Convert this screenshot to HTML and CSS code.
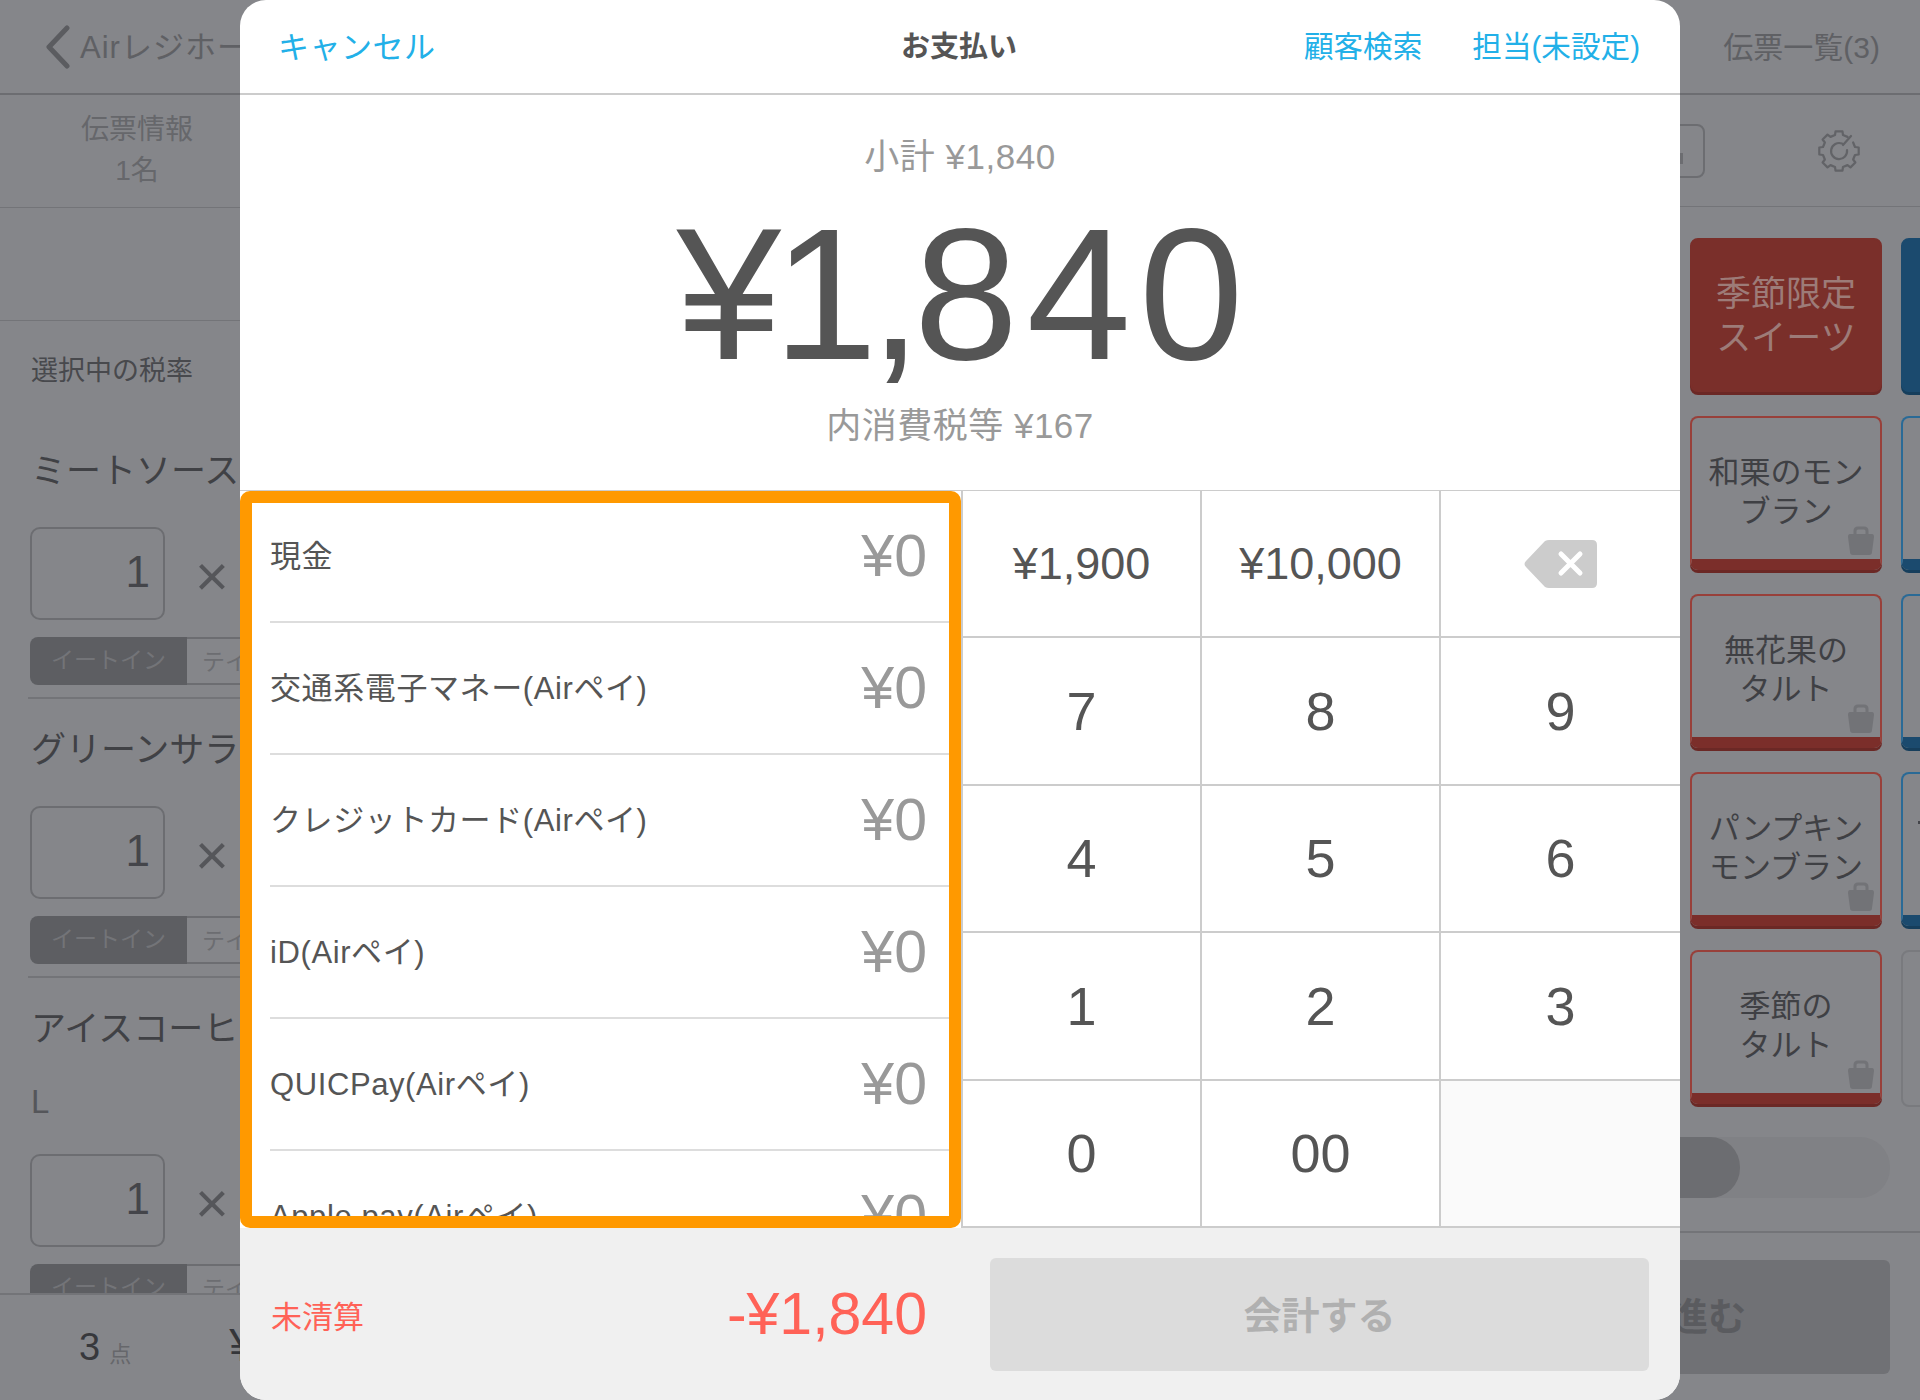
FILE: index.html
```html
<!DOCTYPE html>
<html lang="ja">
<head>
  <meta charset="UTF-8" />
  <title>お支払い</title>
  <link rel="stylesheet" href="styles.css">
</head>
<body>

  <div class="register">
    <div class="topbar">
      <div class="back">
        <svg class="chevron" width="28" height="44" viewBox="0 0 28 44"><path d="M23 3 L5 22 L23 41" fill="none" stroke="#5b5c60" stroke-width="5" stroke-linecap="round" stroke-linejoin="round"/></svg>
        <span>Airレジホーム</span>
      </div>
      <div class="slips">伝票一覧(3)</div>
    </div>

    <div class="columns">
      <div class="ticket">
        <div class="ticket-info">伝票情報<br>1名</div>
        <div class="ticket-blank"></div>
        <div class="tax">選択中の税率</div>
        <div class="items">
          <div class="item">
            <div class="name">ミートソース</div>
            <div class="qty-row"><div class="qty">1</div><div class="times">×</div></div>
            <div class="seg"><div class="seg-on">イートイン</div><div class="seg-off">テイクアウト</div></div>
          </div>
          <div class="item">
            <div class="name">グリーンサラダ</div>
            <div class="qty-row"><div class="qty">1</div><div class="times">×</div></div>
            <div class="seg"><div class="seg-on">イートイン</div><div class="seg-off">テイクアウト</div></div>
          </div>
          <div class="item">
            <div class="name">アイスコーヒー</div>
            <div class="opt">L</div>
            <div class="qty-row"><div class="qty">1</div><div class="times">×</div></div>
            <div class="seg"><div class="seg-on">イートイン</div><div class="seg-off">テイクアウト</div></div>
          </div>
        </div>
        <div class="ticket-foot">
          <span class="count">3</span><span class="unit">点</span><span class="foot-total">¥1,840</span>
        </div>
      </div>

      <div class="menu">
        <div class="toolbar">
          <div class="tool-btn"><div class="tool-mark"></div></div>
          <svg class="gear" width="48" height="48" viewBox="-24 -24 48 48" fill="none" stroke="#626367" stroke-width="2.2" stroke-linejoin="round" stroke-linecap="round">
            <polyline points="14.14,-8.5 16.01,-3.99 19.7,-3.48 19.7,3.48 16.01,3.99 14.14,8.5 16.38,11.48 11.48,16.38 8.5,14.14 3.99,16.01 3.48,19.7 -3.48,19.7 -3.99,16.01 -8.5,14.14 -11.48,16.38 -16.38,11.48 -14.14,8.5 -16.01,3.99 -19.7,3.48 -19.7,-3.48 -16.01,-3.99 -14.14,-8.5 -16.38,-11.48 -11.48,-16.38 -8.5,-14.14 -3.99,-16.01 -3.48,-19.7 3.48,-19.7 3.99,-16.01 8.5,-14.14"/>
            <path d="M8 -1 A8 8 0 1 1 3 -7.4 M4 -6 L12 -15"/>
          </svg>
        </div>
        <div class="tiles">
          <div class="tile tile-cat red">季節限定<br>スイーツ</div>
          <div class="tile tile-cat blue"></div>
          <div class="tile red">和栗のモン<br>ブラン
            <svg class="bag" width="28" height="30" viewBox="0 0 28 30"><path d="M8 9 V5 Q8 2 11 2 H17 Q20 2 20 5 V9" fill="none" stroke="#727377" stroke-width="3"/><path d="M3 8 H25 Q27 8 27 11 L25 26 Q25 29 22 29 H6 Q3 29 3 26 L1 11 Q1 8 3 8 Z" fill="#727377"/></svg>
          </div>
          <div class="tile blue"></div>
          <div class="tile red">無花果の<br>タルト
            <svg class="bag" width="28" height="30" viewBox="0 0 28 30"><path d="M8 9 V5 Q8 2 11 2 H17 Q20 2 20 5 V9" fill="none" stroke="#727377" stroke-width="3"/><path d="M3 8 H25 Q27 8 27 11 L25 26 Q25 29 22 29 H6 Q3 29 3 26 L1 11 Q1 8 3 8 Z" fill="#727377"/></svg>
          </div>
          <div class="tile blue"></div>
          <div class="tile red">パンプキン<br>モンブラン
            <svg class="bag" width="28" height="30" viewBox="0 0 28 30"><path d="M8 9 V5 Q8 2 11 2 H17 Q20 2 20 5 V9" fill="none" stroke="#727377" stroke-width="3"/><path d="M3 8 H25 Q27 8 27 11 L25 26 Q25 29 22 29 H6 Q3 29 3 26 L1 11 Q1 8 3 8 Z" fill="#727377"/></svg>
          </div>
          <div class="tile blue"><div class="tile-mark"></div></div>
          <div class="tile red">季節の<br>タルト
            <svg class="bag" width="28" height="30" viewBox="0 0 28 30"><path d="M8 9 V5 Q8 2 11 2 H17 Q20 2 20 5 V9" fill="none" stroke="#727377" stroke-width="3"/><path d="M3 8 H25 Q27 8 27 11 L25 26 Q25 29 22 29 H6 Q3 29 3 26 L1 11 Q1 8 3 8 Z" fill="#727377"/></svg>
          </div>
          <div class="tile empty"></div>
        </div>
        <div class="pager"><div class="pager-thumb"></div></div>
        <div class="menu-foot">
          <div class="next-btn">進む</div>
        </div>
      </div>
    </div>
  </div>

  <div class="modal">
    <div class="modal-head">
      <a class="link" href="#">キャンセル</a>
      <div class="modal-title">お支払い</div>
      <div class="head-right">
        <a class="link" href="#">顧客検索</a>
        <a class="link" href="#">担当(未設定)</a>
      </div>
    </div>

    <div class="summary">
      <div class="sub">小計 ¥1,840</div>
      <div class="total"><span class="total-tight">¥1,</span><span class="total-wide">840</span></div>
      <div class="sub sub-tax">内消費税等 ¥167</div>
    </div>

    <div class="pay-area">
      <div class="methods">
        <div class="method"><span>現金</span><span class="amount">¥0</span></div>
        <div class="method"><span>交通系電子マネー(Airペイ)</span><span class="amount">¥0</span></div>
        <div class="method"><span>クレジットカード(Airペイ)</span><span class="amount">¥0</span></div>
        <div class="method"><span>iD(Airペイ)</span><span class="amount">¥0</span></div>
        <div class="method"><span>QUICPay(Airペイ)</span><span class="amount">¥0</span></div>
        <div class="method"><span>Apple pay(Airペイ)</span><span class="amount">¥0</span></div>
        <div class="frame"></div>
      </div>
      <div class="keypad">
        <div class="key key-small">¥1,900</div>
        <div class="key key-small">¥10,000</div>
        <div class="key">
          <svg width="74" height="50" viewBox="0 0 74 50"><path d="M25 1 H68 Q73 1 73 6 V44 Q73 49 68 49 H25 Q23 49 21 48 L2 28 Q-1 25 2 22 L21 2 Q23 1 25 1 Z" fill="#cccccc"/><path d="M37 15 L56 34 M56 15 L37 34" stroke="#fff" stroke-width="5" stroke-linecap="round"/></svg>
        </div>
        <div class="key">7</div>
        <div class="key">8</div>
        <div class="key">9</div>
        <div class="key">4</div>
        <div class="key">5</div>
        <div class="key">6</div>
        <div class="key">1</div>
        <div class="key">2</div>
        <div class="key">3</div>
        <div class="key">0</div>
        <div class="key">00</div>
        <div class="key key-blank"></div>
      </div>
    </div>

    <div class="modal-foot">
      <div class="balance">
        <span class="balance-label">未清算</span>
        <span class="balance-value">-¥1,840</span>
      </div>
      <div class="checkout">会計する</div>
    </div>
  </div>

</body>
</html>
```

FILE: styles.css
```css
* {
  box-sizing: border-box;
}

html, body {
  margin: 0;
  padding: 0;
  height: 1400px;
  overflow: hidden;
}

body {
  position: relative;
  background-color: #85868a;
  font-family: "Liberation Sans", "Noto Sans CJK JP", sans-serif;
  color: #3f4044;
}

a {
  text-decoration: none;
}

/* register screen behind the dialog */
.register {
  width: 1920px;
  height: 1400px;
  display: flex;
  flex-direction: column;
}

.topbar {
  height: 95px;
  flex: none;
  display: flex;
  justify-content: space-between;
  align-items: center;
  padding: 0 40px 0 44px;
  border-bottom: 2px solid #6c6d71;
  font-size: 30px;
  color: #5f6064;
}

.back {
  display: flex;
  align-items: center;
  gap: 8px;
}

.back span {
  font-size: 31px;
  letter-spacing: 1px;
  white-space: nowrap;
  padding-bottom: 5px;
}

.slips {
  font-size: 30px;
  padding-bottom: 3px;
}

.columns {
  flex: 1;
  min-height: 0;
  display: flex;
}

.ticket {
  width: 620px;
  flex: none;
  display: flex;
  flex-direction: column;
}

.ticket-info {
  width: 274px;
  height: 112px;
  flex: none;
  padding-top: 14px;
  text-align: center;
  font-size: 28px;
  line-height: 41px;
  color: #66676b;
}

.ticket-blank {
  height: 114px;
  flex: none;
  border-top: 1px solid #737478;
  border-bottom: 1px solid #737478;
}

.tax {
  height: 99px;
  flex: none;
  padding: 31px 0 0 31px;
  font-size: 27px;
  line-height: 38px;
  color: #48494d;
}

.items {
  flex: 1;
  min-height: 0;
  overflow: hidden;
  padding-left: 28px;
}

.item {
  border-bottom: 2px solid #737478;
}

.name {
  height: 96px;
  margin-bottom: 11px;
  line-height: 102px;
  font-size: 35px;
  white-space: nowrap;
  padding-left: 3px;
  color: #404145;
}

.opt {
  height: 56px;
  margin-top: -11px;
  margin-bottom: 24px;
  line-height: 56px;
  font-size: 33px;
  padding-left: 3px;
  color: #55565a;
}

.qty-row {
  display: flex;
  align-items: center;
  height: 93px;
  margin-left: 2px;
}

.qty {
  width: 135px;
  height: 93px;
  border: 2px solid #6c6d71;
  border-radius: 10px;
  padding-right: 13px;
  text-align: right;
  font-size: 44px;
  line-height: 86px;
  color: #44454a;
}

.times {
  margin-left: 30px;
  font-size: 58px;
  line-height: 93px;
  color: #55565a;
  padding-top: 4px;
}

.seg {
  display: flex;
  height: 48px;
  width: 420px;
  margin: 17px 0 12px 2px;
  border-radius: 8px;
  overflow: hidden;
  font-size: 23px;
  line-height: 46px;
  text-align: center;
}

.seg-on {
  width: 157px;
  background-color: #5d5e62;
  color: #737478;
}

.seg-off {
  flex: 1;
  padding-left: 15px;
  border: 2px solid #6c6d71;
  border-left: 0;
  text-align: left;
  color: #6c6d71;
}

.ticket-foot {
  height: 107px;
  flex: none;
  display: flex;
  align-items: center;
  padding-left: 79px;
  border-top: 2px solid #737478;
  background-color: #85868a;
}

.count {
  font-size: 38px;
  color: #37383c;
}

.unit {
  margin: 8px 0 0 9px;
  font-size: 22px;
  color: #66676b;
}

.foot-total {
  margin-left: 98px;
  margin-top: -6px;
  font-size: 46px;
  color: #35363a;
}

.menu {
  flex: 1;
  min-width: 0;
  display: flex;
  flex-direction: column;
}

.toolbar {
  height: 112px;
  flex: none;
  display: flex;
  justify-content: flex-end;
  align-items: center;
  padding-right: 57px;
  border-bottom: 1px solid #737478;
}

.tool-btn {
  position: relative;
  width: 60px;
  height: 54px;
  margin-right: 110px;
  border: 2px solid #6c6d71;
  border-radius: 8px;
}

.tool-mark {
  position: absolute;
  right: 20px;
  top: 27px;
  width: 3px;
  height: 11px;
  background-color: #6c6d71;
}

.tiles {
  display: grid;
  grid-template-columns: 192px 192px;
  grid-auto-rows: 157px;
  column-gap: 19px;
  row-gap: 21px;
  margin: 31px 0 0 1070px;
  height: 869px;
}

.tile {
  position: relative;
  display: flex;
  align-items: center;
  justify-content: center;
  text-align: center;
  height: 154px;
  padding-top: 6px;
  border: 2px solid #98403a;
  border-bottom: 11px solid #7b2e2a;
  border-radius: 8px;
  box-shadow: 0 3px 0 #6b2825;
  font-size: 31px;
  line-height: 39px;
  color: #3f4044;
}

.tile.blue {
  border-color: #2a6a96 #2a6a96 #1b4a6e;
  box-shadow: 0 3px 0 #163e5c;
}

.tile-cat {
  background-color: #7a2f2a;
  border-color: #7a2f2a;
  border-bottom-width: 1px;
  padding-top: 0;
  font-size: 35px;
  line-height: 44px;
  color: #9d7b78;
}

.tile-cat.blue {
  background-color: #1b4a6e;
  border-color: #1b4a6e;
}

.tile.empty {
  height: 157px;
  border: 2px solid #797a7e;
  box-shadow: none;
}

.tile-mark {
  position: absolute;
  left: 15px;
  top: 47px;
  width: 4px;
  height: 3px;
  background-color: #44454a;
}

.bag {
  position: absolute;
  right: 5px;
  bottom: 3px;
}

.pager {
  width: 790px;
  height: 61px;
  margin-top: 30px;
  border-radius: 30px;
  background-color: #808185;
  margin-left: 480px;
  flex: none;
}

.pager-thumb {
  width: 640px;
  height: 61px;
  border-radius: 30px;
  background-color: #6c6d71;
}

.menu-foot {
  flex: 1;
  margin-top: 33px;
  border-top: 2px solid #737478;
  padding: 27px 30px 0 0;
  display: flex;
  justify-content: flex-end;
}

.next-btn {
  width: 364px;
  height: 114px;
  background-color: #707175;
  border-radius: 6px;
  text-align: center;
  font-size: 38px;
  font-weight: bold;
  line-height: 114px;
  color: #5a5b5f;
}

/* payment dialog */
.modal {
  position: absolute;
  top: 0;
  left: 240px;
  width: 1440px;
  height: 1400px;
  display: flex;
  flex-direction: column;
  background: #fff;
  border-radius: 26px;
  overflow: hidden;
}

.modal-head {
  height: 95px;
  flex: none;
  display: grid;
  grid-template-columns: 1fr auto 1fr;
  align-items: center;
  padding: 0 40px 5px 38px;
  border-bottom: 2px solid #ccc;
}

.link {
  font-size: 29.6px;
  color: #22b0e8;
}

.modal-head > .link {
  font-size: 31px;
  letter-spacing: 0.5px;
}

.modal-title {
  font-size: 29px;
  font-weight: bold;
  color: #555;
}

.head-right {
  display: flex;
  justify-content: flex-end;
  gap: 50px;
}

.summary {
  height: 395px;
  flex: none;
  padding-top: 36px;
  display: flex;
  flex-direction: column;
  align-items: center;
}

.sub {
  height: 52px;
  line-height: 52px;
  font-size: 35px;
  letter-spacing: 0.5px;
  color: #999;
}

.sub-tax {
  margin-top: -5px;
}

.total {
  height: 222px;
  line-height: 222px;
  font-size: 188px;
  color: #555;
}

.total-tight {
  letter-spacing: -8px;
}

.total-wide {
  letter-spacing: 8px;
  margin-right: -8px;
}

.pay-area {
  height: 738px;
  flex: none;
  display: flex;
  border-top: 1px solid #ccc;
}

.methods {
  position: relative;
  width: 721px;
  flex: none;
  overflow: hidden;
  padding-left: 30px;
}

.method {
  height: 132px;
  flex: none;
  display: flex;
  justify-content: space-between;
  align-items: center;
  padding-right: 34px;
  padding-bottom: 5px;
  border-bottom: 2px solid #ddd;
  font-size: 31px;
  letter-spacing: 0.6px;
  color: #555;
  white-space: nowrap;
}

.amount {
  margin-top: 5px;
  font-size: 59px;
  letter-spacing: 0;
  color: #999;
}

.frame {
  position: absolute;
  inset: 0;
  border: 12px solid #ff9900;
  border-radius: 10px;
}

.keypad {
  flex: 1;
  display: grid;
  grid-template-columns: 239px 239px 1fr;
  grid-template-rows: repeat(5, 1fr);
  border-left: 2px solid #ccc;
}

.key {
  display: flex;
  align-items: center;
  justify-content: center;
  border-right: 2px solid #ccc;
  border-bottom: 2px solid #ccc;
  font-size: 54px;
  color: #555;
}

.key:nth-child(3n) {
  border-right: 0;
}

.key-small {
  font-size: 45px;
}

.key-blank {
  background-color: #fafafa;
}

.modal-foot {
  flex: 1;
  display: flex;
  align-items: center;
  background-color: #f0f0f0;
  padding: 0 31px 0 31px;
}

.balance {
  width: 656px;
  flex: none;
  display: flex;
  justify-content: space-between;
  align-items: center;
  color: #ff6257;
}

.balance-label {
  font-size: 31px;
}

.balance-value {
  font-size: 59px;
}

.checkout {
  width: 659px;
  height: 113px;
  margin-left: 63px;
  background-color: #dcdcdc;
  border-radius: 6px;
  text-align: center;
  font-size: 38px;
  font-weight: bold;
  line-height: 116px;
  color: #b0b0b0;
}
```
